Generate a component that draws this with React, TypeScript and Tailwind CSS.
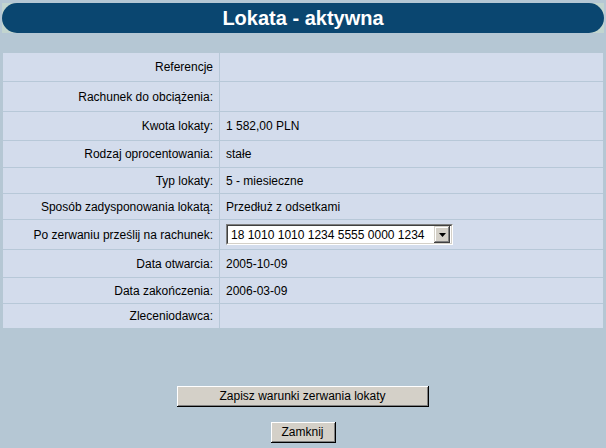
import React from "react";

const rows: { label: string; value?: string; h: string; select?: boolean }[] = [
  { label: "Referencje", h: "h-[28px]" },
  { label: "Rachunek do obciążenia:", h: "h-[29px]" },
  { label: "Kwota lokaty:", value: "1 582,00 PLN", h: "h-[28px]" },
  { label: "Rodzaj oprocentowania:", value: "stałe", h: "h-[26px]" },
  { label: "Typ lokaty:", value: "5 - miesieczne", h: "h-[25px]" },
  { label: "Sposób zadysponowania lokatą:", value: "Przedłuż z odsetkami", h: "h-[25px]" },
  { label: "Po zerwaniu prześlij na rachunek:", h: "h-[29px]", select: true },
  { label: "Data otwarcia:", value: "2005-10-09", h: "h-[27px]" },
  { label: "Data zakończenia:", value: "2006-03-09", h: "h-[25px]" },
  { label: "Zleceniodawca:", h: "h-[24px]" },
];

function WinButton({ children, className }: { children: React.ReactNode; className: string }) {
  return (
    <div className={"bg-black pr-px pb-px " + className}>
      <div className="h-full w-full border-t border-l border-white bg-[#808080] pr-px pb-px">
        <div className="flex h-full w-full items-center justify-center bg-[#d4d0c8] text-[12px] text-black">
          {children}
        </div>
      </div>
    </div>
  );
}

export default function App() {
  return (
    <div
      className="relative h-[448px] w-[606px] overflow-hidden bg-[#b5c7d4] text-black"
      style={{ fontFamily: '"Liberation Sans", Arial, sans-serif' }}
    >
      <div className="ml-[2px] mt-[3px] h-[30px] w-[602px] bg-[#c2d5cf]">
        <div className="flex h-full w-full items-center justify-center rounded-full bg-[#0a4670] text-[20px] font-bold text-white">
          Lokata - aktywna
        </div>
      </div>

      <div className="ml-[3px] mt-[20px] flex w-[600px] flex-col gap-px bg-[#b7c8d8]">
        {rows.map((r) => (
          <div key={r.label} className={"flex gap-px text-[12px] " + r.h}>
            <div className="flex w-[216px] items-center justify-end bg-[#d3dcec] pr-[6px]">{r.label}</div>
            <div className="flex flex-1 items-center bg-[#d3dcec] pl-[6px]">
              {r.select ? (
                <div className="h-[21px] w-[227px] border-t border-l border-[#808080] border-r border-b border-r-white border-b-white">
                  <div className="flex h-full w-full items-center border-t border-l border-[#404040] border-r border-b border-r-[#d4d0c8] border-b-[#d4d0c8] bg-white">
                    <span className="flex-1 pl-[3px] text-[12px]">18 1010 1010 1234 5555 0000 1234</span>
                    <div className="mr-px h-[17px] w-[16px] bg-[#404040] pr-px pb-px">
                      <div className="h-full w-full border-t border-l border-[#d4d0c8] bg-[#808080] pr-px pb-px">
                        <div className="flex h-full w-full items-center justify-center border-t border-l border-white bg-[#d4d0c8]">
                          <svg width="7" height="4" viewBox="0 0 7 4">
                            <path d="M0 0H7L3.5 4Z" fill="#000" />
                          </svg>
                        </div>
                      </div>
                    </div>
                  </div>
                </div>
              ) : (
                r.value ?? ""
              )}
            </div>
          </div>
        ))}
      </div>

      <div className="mt-[58px] flex flex-col items-center">
        <WinButton className="ml-[0px] h-[21px] w-[252px]">Zapisz warunki zerwania lokaty</WinButton>
        <WinButton className="mt-[15px] h-[21px] w-[65px]">Zamknij</WinButton>
      </div>
    </div>
  );
}
